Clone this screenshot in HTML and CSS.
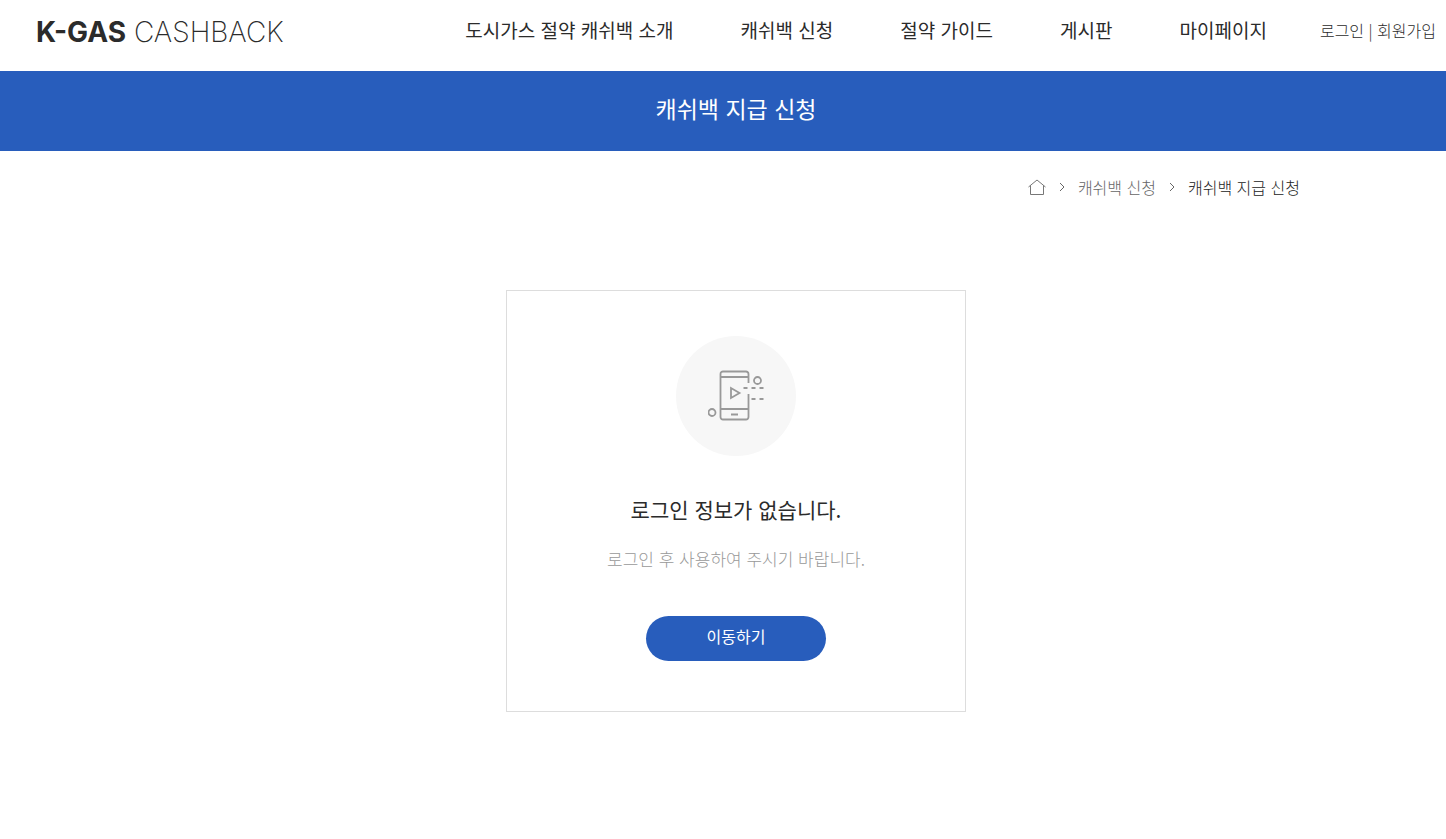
FILE: index.html
```html
<!DOCTYPE html>
<html lang="ko">
<head>
    <meta charset="UTF-8">
    <meta name="viewport" content="width=device-width, initial-scale=1.0">
    <title>K-GAS CASHBACK</title>
    <link rel="stylesheet" href="styles.css">
</head>
<body>
    <header class="header">
        <a class="logo" href="#"><strong>K-GAS</strong> CASHBACK</a>
        <nav class="gnb">
            <a href="#">도시가스 절약 캐쉬백 소개</a>
            <a href="#">캐쉬백 신청</a>
            <a href="#">절약 가이드</a>
            <a href="#">게시판</a>
            <a href="#">마이페이지</a>
        </nav>
        <div class="util">
            <a href="#">로그인</a> | <a href="#">회원가입</a>
        </div>
    </header>

    <div class="title-bar">
        <h1>캐쉬백 지급 신청</h1>
    </div>

    <nav class="breadcrumb">
        <a class="home" href="#" aria-label="홈">
            <svg width="18" height="16" viewBox="0 0 18 16" fill="none" stroke="#777">
                <path d="M.5 8L9 1l8.500 7M2.500 6.500v9h13v-9"/>
            </svg>
        </a>
        <svg class="arrow" width="6" height="10" viewBox="0 0 6 10" fill="none" stroke="#666">
            <path d="M1 1l4 4-4 4"/>
        </svg>
        <a href="#">캐쉬백 신청</a>
        <svg class="arrow" width="6" height="10" viewBox="0 0 6 10" fill="none" stroke="#666">
            <path d="M1 1l4 4-4 4"/>
        </svg>
        <span class="current">캐쉬백 지급 신청</span>
    </nav>

    <main class="content">
        <section class="login-box">
            <div class="icon-circle">
                <svg width="56" height="52" viewBox="0 0 56 52" fill="none" stroke="#999" stroke-width="1.8">
                    <path d="M40.500 13V4a2.500 2.500 0 0 0-2.500-2.500H15A2.500 2.500 0 0 0 12.500 4v43a2.500 2.500 0 0 0 2.500 2.500h23a2.500 2.500 0 0 0 2.500-2.500V24"/>
                    <path d="M12.500 7h28M12.500 39h28M23 44.500h7"/>
                    <path d="M23 18v10l8.500-5z"/>
                    <circle cx="49.500" cy="10.500" r="3.500"/>
                    <circle cx="4" cy="42.500" r="3.500"/>
                    <path d="M35.500 18h4M43.500 18h4M51.500 18h4M43.500 29h4M51.500 29h4"/>
                </svg>
            </div>
            <h2>로그인 정보가 없습니다.</h2>
            <p>로그인 후 사용하여 주시기 바랍니다.</p>
            <button type="button" class="go-btn">이동하기</button>
        </section>
    </main>
</body>
</html>
```
FILE: styles.css
```css
* {
    box-sizing: border-box;
}

body {
    margin: 0;
    font-family: "Noto Sans CJK KR", sans-serif;
    font-size: 16px;
    font-weight: 300;
    line-height: 24px;
    color: #2b2b2b;
    background-color: #fff;
}

a {
    color: inherit;
    text-decoration: none;
}

.header {
    display: flex;
    align-items: flex-start;
    padding: 18px 10px 25px 36px;
    white-space: nowrap;
}

.logo {
    font-family: Inter, sans-serif;
    font-size: 28px;
    font-weight: 200;
    line-height: 28px;
}

.logo strong {
    font-weight: 700;
}

.gnb {
    display: flex;
    gap: 67px;
    margin-left: auto;
    font-size: 19px;
    font-weight: 400;
}

.util {
    margin-left: 53px;
}

.title-bar {
    padding: 19px 0 25px 26px;
    background-color: #285dbc;
    color: #fff;
    text-align: center;
}

.title-bar h1 {
    margin: 0;
    font-size: 23px;
    font-weight: 400;
    line-height: 36px;
}

.breadcrumb {
    display: flex;
    justify-content: flex-end;
    align-items: center;
    gap: 13px;
    padding: 24px 146px 0 0;
    color: #666;
}

.breadcrumb .home {
    display: flex;
}

.breadcrumb .current {
    color: #222;
}

.content {
    padding: 91px 0 120px 26px;
}

.login-box {
    display: flex;
    flex-direction: column;
    align-items: center;
    max-width: 460px;
    margin: 0 auto;
    padding: 45px 20px 50px;
    border: 1px solid #ddd;
}

.icon-circle {
    display: flex;
    justify-content: center;
    align-items: center;
    width: 120px;
    height: 120px;
    border-radius: 50%;
    background-color: #f7f7f7;
}

.login-box h2 {
    margin: 37px 0 0;
    font-size: 21px;
    font-weight: 400;
    line-height: 32px;
}

.login-box p {
    margin: 22px 0 0;
    font-size: 17px;
    color: #999;
}

.go-btn {
    width: 180px;
    height: 45px;
    margin-top: 45px;
    padding: 0 0 5px;
    border: none;
    border-radius: 23px;
    background-color: #285dbc;
    color: #fff;
    font-family: inherit;
    font-size: 16px;
    font-weight: 400;
    cursor: pointer;
}
```
